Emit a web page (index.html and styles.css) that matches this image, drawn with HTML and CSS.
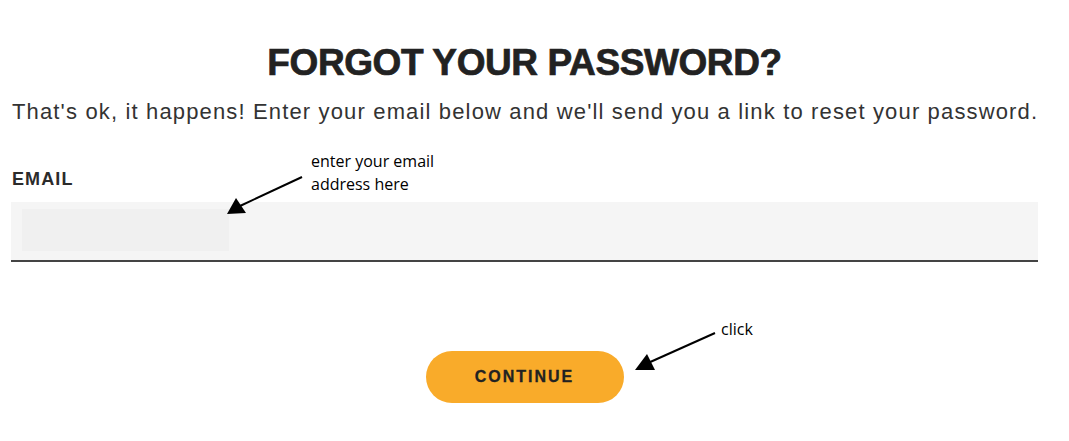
FILE: index.html
```html
<!DOCTYPE html>
<html lang="en">
<head>
	<meta charset="UTF-8">
	<meta name="viewport" content="width=device-width, initial-scale=1.0">
	<title>Forgot Your Password</title>
	<link rel="stylesheet" href="styles.css">
</head>
<body>

<div class="container">
	<h1>FORGOT YOUR PASSWORD?</h1>
	<p class="intro">That's ok, it happens! Enter your email below and we'll send you a link to reset your password.</p>

	<div class="input-group">
		<label for="email">EMAIL</label>
		<div class="field">
			<div class="autofill"></div>
		</div>
	</div>

	<div class="actions">
		<button type="button">CONTINUE</button>
	</div>

	<!-- annotations drawn over the form -->
	<div class="note note-email">enter your email<br>address here</div>
	<div class="note note-click">click</div>
	<svg class="arrows" width="1069" height="441" viewBox="0 0 1069 441">
		<line x1="302" y1="177" x2="240" y2="206" stroke="#000" stroke-width="2"/>
		<polygon points="227,214 236,198 246,213" fill="#000"/>
		<line x1="715" y1="333" x2="648" y2="363" stroke="#000" stroke-width="2"/>
		<polygon points="635,370 647,354 655,370" fill="#000"/>
	</svg>
</div>

</body>
</html>
```

FILE: styles.css
```css
body {
	margin: 0;
	font-family: "Liberation Sans", Arial, sans-serif;
	color: #333;
	background: #fff;
}
.container {
	position: relative;
	width: 1027px;
	margin-left: 11px;
	height: 441px;
}
h1 {
	margin: 0;
	padding-top: 42px;
	font-size: 37px;
	font-weight: 900;
	line-height: 42px;
	text-align: center;
	color: #222;
	letter-spacing: -0.4px;
	-webkit-text-stroke: 0.7px #222;
}
.intro {
	margin: 15px 0 0 1px;
	font-size: 22px;
	line-height: 26px;
	color: #333;
	letter-spacing: 1.15px;
	white-space: nowrap;
}
.input-group {
	margin-top: 44px;
}
label {
	display: block;
	margin-left: 1px;
	font-size: 18px;
	font-weight: bold;
	line-height: 20px;
	color: #2b2b2b;
	letter-spacing: 1.1px;
}
.field {
	margin-top: 13px;
	background: #f5f5f5;
	border-bottom: 2px solid #444;
	padding: 7px 11px;
	height: 44px;
}
.autofill {
	width: 207px;
	height: 42px;
	background: #f0f0f0;
}
.actions {
	display: flex;
	justify-content: center;
	margin-top: 89px;
}
button {
	width: 198px;
	height: 52px;
	border: none;
	border-radius: 26px;
	background-color: #f9ab2a;
	color: #222;
	font-family: "Liberation Sans", Arial, sans-serif;
	font-size: 16px;
	font-weight: bold;
	letter-spacing: 2px;
	-webkit-text-stroke: 0.3px #222;
	cursor: pointer;
}
.note {
	position: absolute;
	font-family: "Open Sans", sans-serif;
	font-size: 16px;
	line-height: 23px;
	color: #000;
}
.note-email {
	left: 300px;
	top: 150px;
}
.note-click {
	left: 710px;
	top: 318px;
}
.arrows {
	position: absolute;
	left: -11px;
	top: 0;
	pointer-events: none;
}
```
